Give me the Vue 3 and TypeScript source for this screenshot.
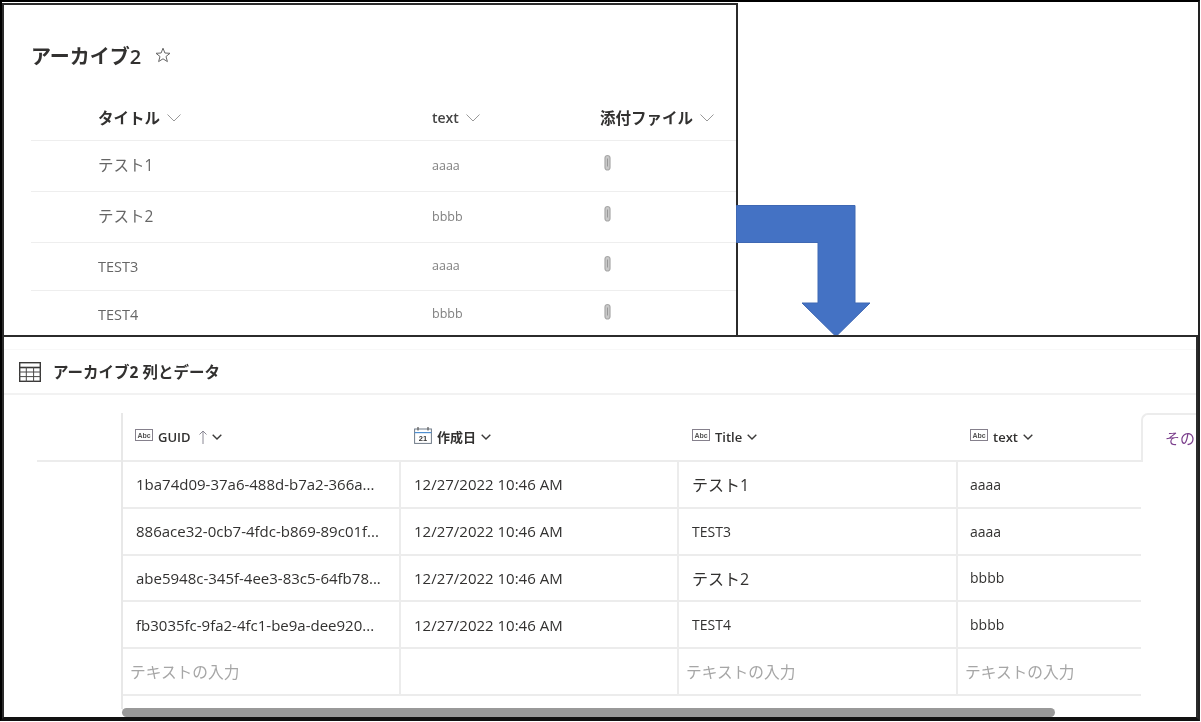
<script setup lang="ts">
interface ListRow { title: string; text: string; cls: string }
interface GridRow { guid: string; created: string; title: string; text: string }

const listRows: ListRow[] = [
  { title: 'テスト1', text: 'aaaa', cls: 'tall' },
  { title: 'テスト2', text: 'bbbb', cls: 'tall' },
  { title: 'TEST3', text: 'aaaa', cls: 'short' },
  { title: 'TEST4', text: 'bbbb', cls: 'short' },
]

const gridRows: GridRow[] = [
  { guid: '1ba74d09-37a6-488d-b7a2-366a...', created: '12/27/2022 10:46 AM', title: 'テスト1', text: 'aaaa' },
  { guid: '886ace32-0cb7-4fdc-b869-89c01f...', created: '12/27/2022 10:46 AM', title: 'TEST3', text: 'aaaa' },
  { guid: 'abe5948c-345f-4ee3-83c5-64fb78...', created: '12/27/2022 10:46 AM', title: 'テスト2', text: 'bbbb' },
  { guid: 'fb3035fc-9fa2-4fc1-be9a-dee920...', created: '12/27/2022 10:46 AM', title: 'TEST4', text: 'bbbb' },
]
</script>

<template>
  <div class="canvas">
    <div class="frame"></div>

    <section class="list-window">
      <h1 class="list-title">
        <span>アーカイブ2</span>
        <svg class="star" viewBox="0 0 16 16" width="16" height="16">
          <polygon points="8,1.2 9.9,6 15,6.3 11,9.5 12.4,14.6 8,11.8 3.6,14.6 5,9.5 1,6.3 6.1,6" fill="none" stroke="#666" stroke-width="1" />
        </svg>
      </h1>
      <div class="list-table">
        <div class="list-head">
          <div class="lh"><span>タイトル</span><svg class="chev-light" viewBox="0 0 14 8" width="14" height="8"><path d="M0.5 0.5 L7 7 L13.5 0.5" /></svg></div>
          <div class="lh lh-text"><span>text</span><svg class="chev-light" viewBox="0 0 14 8" width="14" height="8"><path d="M0.5 0.5 L7 7 L13.5 0.5" /></svg></div>
          <div class="lh"><span>添付ファイル</span><svg class="chev-light" viewBox="0 0 14 8" width="14" height="8"><path d="M0.5 0.5 L7 7 L13.5 0.5" /></svg></div>
        </div>
        <div v-for="r in listRows" :key="r.title" class="list-row" :class="r.cls">
          <div class="lc-title">{{ r.title }}</div>
          <div class="lc-text">{{ r.text }}</div>
          <div class="lc-clip">
            <svg viewBox="0 0 9 18" width="9" height="18">
              <path d="M2 5 V13.5 A2.5 2.5 0 0 0 7 13.5 V4 A2.5 2.5 0 0 0 2 4 V5" fill="#c8c8c8" stroke="#a8a8a8" stroke-width="1.2" />
              <path d="M4.5 4.5 V12.5" fill="none" stroke="#999" stroke-width="1" />
            </svg>
          </div>
        </div>
      </div>
    </section>

    <svg class="arrow" viewBox="0 0 136 133" width="136" height="133">
      <polygon points="0.5,0.5 119,0.5 119,98 134,98 100,131.5 66,98 82,98 82,37.5 0.5,37.5" fill="#4472c4" stroke="#3f68b3" stroke-width="1" />
    </svg>

    <section class="grid-window">
      <header class="grid-header">
        <svg class="table-icon" viewBox="0 0 22 20" width="22" height="20">
          <rect x="0.7" y="0.7" width="20.6" height="18.6" fill="none" stroke="#3b3a39" stroke-width="1.4" />
          <path d="M0 5.5 H22" stroke="#3b3a39" stroke-width="1.6" />
          <path d="M0 10 H22 M0 14.6 H22 M7.3 5 V20 M14.6 5 V20" stroke="#4a4948" stroke-width="1" />
        </svg>
        <h2>アーカイブ2 列とデータ</h2>
      </header>

      <div class="table-area">
        <div class="head-rule"></div>
        <div class="grid-table">
          <div class="gh">
            <svg class="abc" viewBox="0 0 18 12" width="18" height="12"><rect x="0.5" y="0.5" width="17" height="11" fill="#fff" stroke="#85808c" /><text x="9" y="8.6" text-anchor="middle">Abc</text></svg>
            <span>GUID</span>
            <svg class="up" viewBox="0 0 10 14" width="10" height="14"><path d="M5 14 V1 M1.5 4.5 L5 1 L8.5 4.5" /></svg>
            <svg class="chev" viewBox="0 0 10 6" width="10" height="6"><path d="M0.7 0.7 L5 5 L9.3 0.7" /></svg>
          </div>
          <div class="gh">
            <svg class="cal" viewBox="0 0 18 17" width="18" height="17">
              <rect x="0.6" y="2" width="16.8" height="14.4" fill="#fff" stroke="#6f7b88" />
              <path d="M0.6 5.6 H17.4" stroke="#4f8fd0" stroke-width="1.2" />
              <path d="M4 0 V3.4 M14 0 V3.4" stroke="#555" stroke-width="1.2" />
              <text x="9" y="13.8" text-anchor="middle">21</text>
            </svg>
            <span>作成日</span>
            <svg class="chev" viewBox="0 0 10 6" width="10" height="6"><path d="M0.7 0.7 L5 5 L9.3 0.7" /></svg>
          </div>
          <div class="gh">
            <svg class="abc" viewBox="0 0 18 12" width="18" height="12"><rect x="0.5" y="0.5" width="17" height="11" fill="#fff" stroke="#85808c" /><text x="9" y="8.6" text-anchor="middle">Abc</text></svg>
            <span>Title</span>
            <svg class="chev" viewBox="0 0 10 6" width="10" height="6"><path d="M0.7 0.7 L5 5 L9.3 0.7" /></svg>
          </div>
          <div class="gh">
            <svg class="abc" viewBox="0 0 18 12" width="18" height="12"><rect x="0.5" y="0.5" width="17" height="11" fill="#fff" stroke="#85808c" /><text x="9" y="8.6" text-anchor="middle">Abc</text></svg>
            <span>text</span>
            <svg class="chev" viewBox="0 0 10 6" width="10" height="6"><path d="M0.7 0.7 L5 5 L9.3 0.7" /></svg>
          </div>
          <div class="tab"><span>その</span></div>

          <template v-for="r in gridRows" :key="r.guid">
            <div class="gc wide">{{ r.guid }}</div>
            <div class="gc wide">{{ r.created }}</div>
            <div class="gc" :class="{ jp: r.title.startsWith('テ') }">{{ r.title }}</div>
            <div class="gc">{{ r.text }}</div>
            <div class="blank"></div>
          </template>

          <div class="gc ph">テキストの入力</div>
          <div class="gc"></div>
          <div class="gc ph">テキストの入力</div>
          <div class="gc ph">テキストの入力</div>
          <div class="blank"></div>
        </div>
        <div class="scroll-track"><div class="scroll-thumb"></div></div>
      </div>
    </section>
  </div>
</template>

<style scoped>
.canvas {
  position: relative;
  width: 1201px;
  height: 722px;
  overflow: hidden;
  background: #fff;
  font-family: "Open Sans", "Noto Sans CJK JP", sans-serif;
  color: #323130;
  filter: blur(0.3px);
}
.frame {
  position: absolute;
  left: 0;
  top: 0;
  width: 1200px;
  height: 721px;
  box-sizing: border-box;
  border-top: 2px solid #000;
  border-left: 2px solid #000;
  border-right: 2px solid #222;
  border-bottom: 2px solid #111;
}
.list-window {
  position: absolute;
  left: 2px;
  top: 3px;
  width: 736px;
  height: 333px;
  box-sizing: border-box;
  border: 2px solid #2b2b2b;
  border-bottom: 0;
  background: #fff;
  overflow: hidden;
}
.list-title {
  display: flex;
  align-items: center;
  gap: 14px;
  height: 28px;
  margin: 36px 0 0 27px;
  font-size: 20px;
  font-weight: 600;
  color: #323130;
}
.star { margin-top: -1px; }
.list-table { margin: 27px 0 0 27px; }
.list-head,
.list-row {
  display: grid;
  grid-template-columns: 67px 334px 168px 1fr;
  border-bottom: 1px solid #eeeeee;
}
.list-row.short:last-child { border-bottom: 0; }
.list-head { height: 44px; align-items: center; }
.lh {
  display: flex;
  align-items: center;
  gap: 7px;
  margin-top: -1px;
  font-size: 15.5px;
  font-weight: 700;
}
.lh:first-child { grid-column: 2; }
.lh-text { font-size: 14px; font-weight: 600; color: #444; }
.chev-light { fill: none; stroke: #999; stroke-width: 1; }
.list-row { align-items: center; }
.list-row.tall { height: 50px; }
.list-row.short { height: 47px; }
.lc-title { grid-column: 2; font-size: 14.5px; color: #666; }
.list-row.tall .lc-title { font-size: 15.5px; margin-top: -4px; }
.lc-text { font-size: 12.5px; color: #808080; margin-top: -2px; }
.lc-clip { height: 18px; padding-left: 3px; margin-top: -6px; }
.lc-clip svg { display: block; }

.arrow {
  position: absolute;
  left: 736px;
  top: 205px;
}

.grid-window {
  position: absolute;
  left: 2px;
  top: 335px;
  width: 1196px;
  height: 384px;
  box-sizing: border-box;
  border: 2px solid #2b2b2b;
  border-bottom-color: #111;
  background: #fff;
  overflow: hidden;
}
.grid-header {
  display: flex;
  align-items: center;
  gap: 12px;
  height: 46px;
  margin-top: 12px;
  padding-left: 15px;
  box-sizing: border-box;
  border-top: 1px solid #f8f8f8;
  border-bottom: 2px solid #f2f2f2;
}
.grid-header h2 {
  margin: 0;
  font-size: 15.5px;
  font-weight: 700;
  color: #323130;
}
.table-icon { flex: none; }
.table-area {
  position: relative;
  padding: 18px 0 0 117px;
}
.head-rule {
  position: absolute;
  left: 33px;
  width: 84px;
  top: 65px;
  height: 2px;
  background: #ececec;
}
.grid-table {
  display: grid;
  grid-template-columns: 278px 278px 279px 183px 80px;
  grid-template-rows: 49px repeat(5, 46.8px);
  border-left: 2px solid #e8e8e8;
  width: 1100px;
  padding-bottom: 13px;
}
.gh {
  display: flex;
  align-items: center;
  gap: 5px;
  padding-left: 12px;
  font-size: 13px;
  font-weight: 600;
  border-bottom: 2px solid #ececec;
}
.gh:nth-child(2),
.gh:nth-child(3) { padding-left: 13px; }
.gh svg { flex: none; }
.abc { margin-top: -4px; }
.abc text { font-family: "Liberation Sans", sans-serif; font-size: 7px; fill: #555; }
.cal { margin-top: -3px; }
.cal text { font-family: "Liberation Sans", sans-serif; font-size: 7.5px; font-weight: 700; fill: #333; }
.up { fill: none; stroke: #8a8894; stroke-width: 1; margin-left: 2px; margin-right: -1px; }
.chev { fill: none; stroke: #3b3a39; stroke-width: 1.4; }
.tab {
  overflow: hidden;
  border: 2px solid #ececec;
  border-right: 0;
  border-bottom: 0;
  border-top-left-radius: 7px;
  padding: 12px 0 0 22px;
  font-size: 15px;
  color: #7b3f8c;
  white-space: nowrap;
}
.gc {
  display: flex;
  align-items: center;
  padding-left: 13px;
  font-size: 14px;
  white-space: nowrap;
  overflow: hidden;
  border-bottom: 2px solid #ececec;
  border-right: 2px solid #ececec;
  box-sizing: border-box;
}
.gc:nth-child(5n + 4) { border-right: 0; padding-left: 12px; }
.gc.wide { font-size: 15px; }
.gc.jp { font-size: 16px; }
.gc.ph { padding-left: 7px; font-size: 15.7px; color: #a6a6a6; }
.scroll-track {
  position: absolute;
  left: 118px;
  top: 313px;
  width: 1000px;
}
.scroll-thumb {
  width: 933px;
  height: 9px;
  border-radius: 5px;
  background: #999;
}
</style>

<style>
html, body { margin: 0; background: #fff; }
</style>
